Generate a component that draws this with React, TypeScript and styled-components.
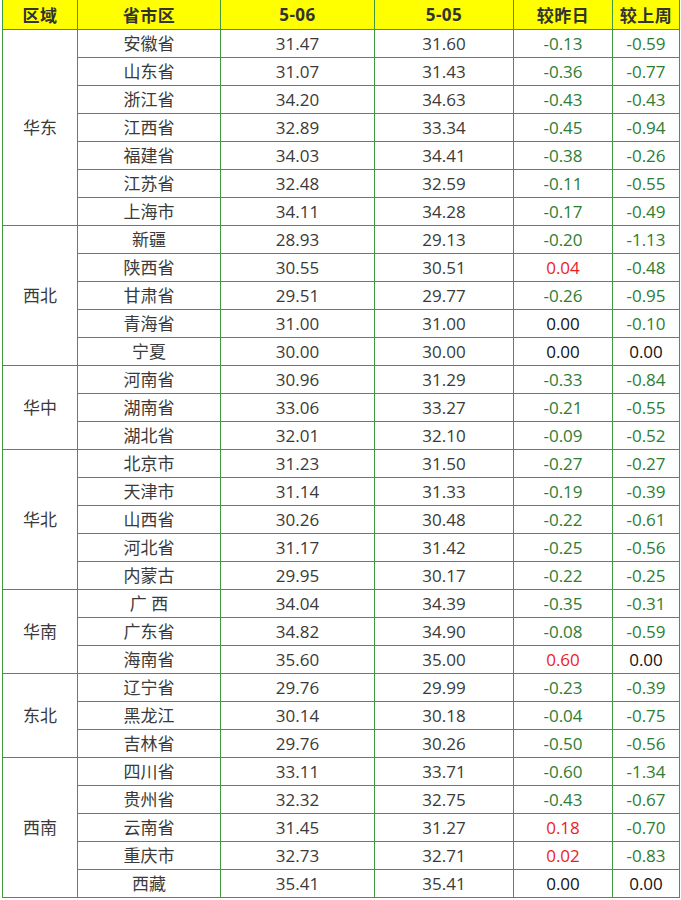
import React from 'react'
import styled, { createGlobalStyle } from 'styled-components'

const Global = createGlobalStyle`
  body {
    margin: 0;
    background: #fff;
    font-family: "Open Sans", "Noto Sans CJK SC", sans-serif;
  }
`

type Row = [string, string, string, string, string]

const data: { region: string; rows: Row[] }[] = [
  {
    region: '华东',
    rows: [
      ['安徽省', '31.47', '31.60', '-0.13', '-0.59'],
      ['山东省', '31.07', '31.43', '-0.36', '-0.77'],
      ['浙江省', '34.20', '34.63', '-0.43', '-0.43'],
      ['江西省', '32.89', '33.34', '-0.45', '-0.94'],
      ['福建省', '34.03', '34.41', '-0.38', '-0.26'],
      ['江苏省', '32.48', '32.59', '-0.11', '-0.55'],
      ['上海市', '34.11', '34.28', '-0.17', '-0.49'],
    ],
  },
  {
    region: '西北',
    rows: [
      ['新疆', '28.93', '29.13', '-0.20', '-1.13'],
      ['陕西省', '30.55', '30.51', '0.04', '-0.48'],
      ['甘肃省', '29.51', '29.77', '-0.26', '-0.95'],
      ['青海省', '31.00', '31.00', '0.00', '-0.10'],
      ['宁夏', '30.00', '30.00', '0.00', '0.00'],
    ],
  },
  {
    region: '华中',
    rows: [
      ['河南省', '30.96', '31.29', '-0.33', '-0.84'],
      ['湖南省', '33.06', '33.27', '-0.21', '-0.55'],
      ['湖北省', '32.01', '32.10', '-0.09', '-0.52'],
    ],
  },
  {
    region: '华北',
    rows: [
      ['北京市', '31.23', '31.50', '-0.27', '-0.27'],
      ['天津市', '31.14', '31.33', '-0.19', '-0.39'],
      ['山西省', '30.26', '30.48', '-0.22', '-0.61'],
      ['河北省', '31.17', '31.42', '-0.25', '-0.56'],
      ['内蒙古', '29.95', '30.17', '-0.22', '-0.25'],
    ],
  },
  {
    region: '华南',
    rows: [
      ['广 西', '34.04', '34.39', '-0.35', '-0.31'],
      ['广东省', '34.82', '34.90', '-0.08', '-0.59'],
      ['海南省', '35.60', '35.00', '0.60', '0.00'],
    ],
  },
  {
    region: '东北',
    rows: [
      ['辽宁省', '29.76', '29.99', '-0.23', '-0.39'],
      ['黑龙江', '30.14', '30.18', '-0.04', '-0.75'],
      ['吉林省', '29.76', '30.26', '-0.50', '-0.56'],
    ],
  },
  {
    region: '西南',
    rows: [
      ['四川省', '33.11', '33.71', '-0.60', '-1.34'],
      ['贵州省', '32.32', '32.75', '-0.43', '-0.67'],
      ['云南省', '31.45', '31.27', '0.18', '-0.70'],
      ['重庆市', '32.73', '32.71', '0.02', '-0.83'],
      ['西藏', '35.41', '35.41', '0.00', '0.00'],
    ],
  },
]

const Table = styled.table`
  margin-left: 2px;
  border-collapse: collapse;
  table-layout: fixed;
  width: 678px;
`

const Head = styled.th`
  height: 29px;
  padding: 0;
  background: #ffff00;
  border: 1px solid #3f9a3f;
  border-top: none;
  color: #333;
  font-size: 17px;
  font-weight: 700;
  text-align: center;
  letter-spacing: 0.5px;
`

const Cell = styled.td<{ $tone?: 'down' | 'up' | 'zero' }>`
  height: 27px;
  padding: 0;
  border: 1px solid #3f9a3f;
  text-align: center;
  font-size: 17px;
  line-height: 20px;
  color: ${(p) =>
    p.$tone === 'down' ? '#2e7d32' : p.$tone === 'up' ? '#ec1c24' : p.$tone === 'zero' ? '#111' : '#3a3a3a'};
`

const tone = (v: string) => (v.startsWith('-') ? 'down' : Number(v) > 0 ? 'up' : 'zero')

export default function App() {
  return (
    <>
      <Global />
      <Table>
        <colgroup>
          <col style={{ width: 75 }} />
          <col style={{ width: 143 }} />
          <col style={{ width: 154 }} />
          <col style={{ width: 139 }} />
          <col style={{ width: 99 }} />
          <col style={{ width: 67 }} />
        </colgroup>
        <thead>
          <tr>
            <Head>区域</Head>
            <Head>省市区</Head>
            <Head>5-06</Head>
            <Head>5-05</Head>
            <Head>较昨日</Head>
            <Head>较上周</Head>
          </tr>
        </thead>
        <tbody>
          {data.map((g) =>
            g.rows.map((r, i) => (
              <tr key={g.region + i}>
                {i === 0 && <Cell rowSpan={g.rows.length}>{g.region}</Cell>}
                <Cell>{r[0]}</Cell>
                <Cell>{r[1]}</Cell>
                <Cell>{r[2]}</Cell>
                <Cell $tone={tone(r[3])}>{r[3]}</Cell>
                <Cell $tone={tone(r[4])}>{r[4]}</Cell>
              </tr>
            ))
          )}
        </tbody>
      </Table>
    </>
  )
}
